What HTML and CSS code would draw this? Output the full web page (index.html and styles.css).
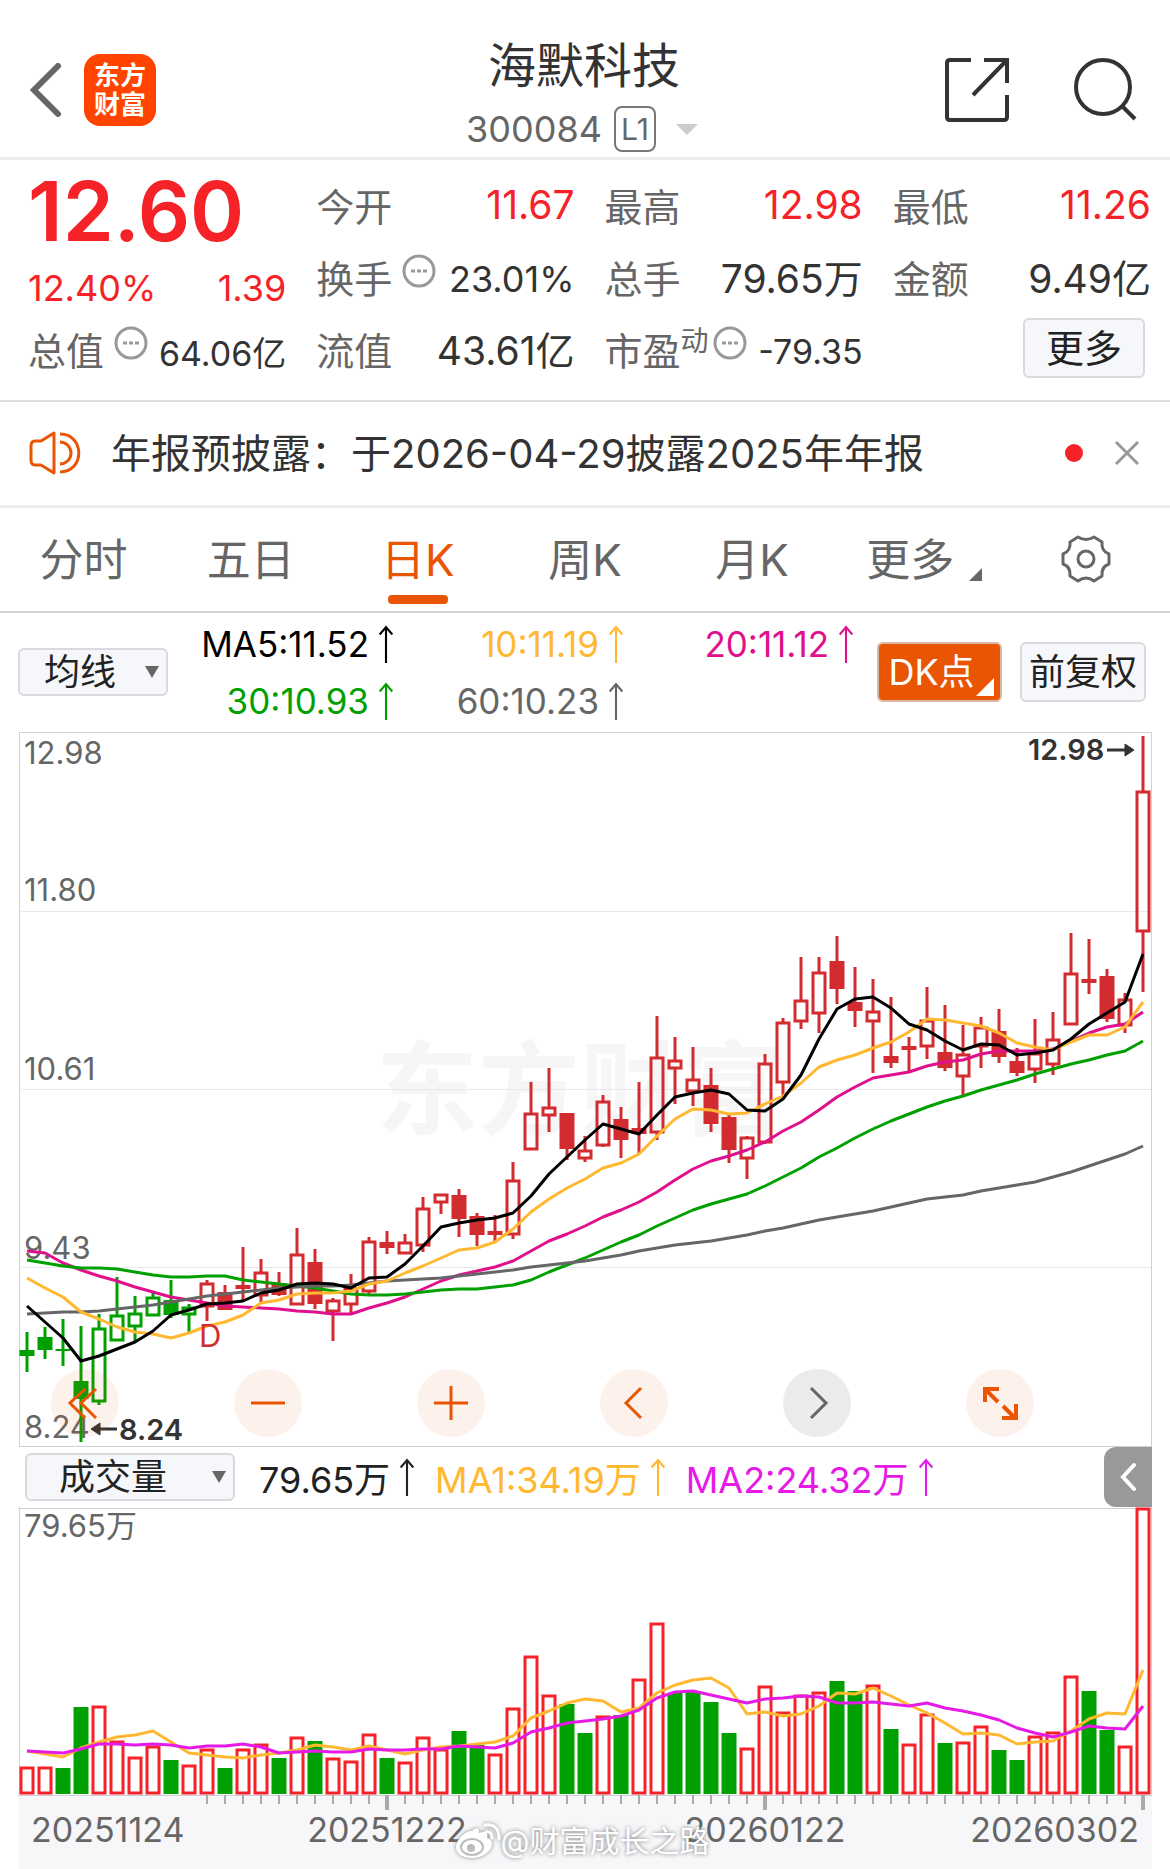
FILE: index.html
```html
<!DOCTYPE html>
<html lang="zh-CN">
<head>
    <meta charset="UTF-8">
    <meta name="viewport" content="width=device-width, initial-scale=1.0">
    <title>海默科技 300084</title>
    <link rel="stylesheet" href="styles.css">
</head>
<body>
    <header class="topbar">
        <div class="topbar-side">
            <button class="icon-btn" aria-label="返回">
                <svg width="32" height="54" viewBox="0 0 32 54"><path d="M28 3 4 27l24 24" fill="none" stroke="#666" stroke-width="6" stroke-linecap="round"/></svg>
            </button>
            <a class="logo" href="#">东方<br>财富</a>
        </div>
        <div class="stock">
            <h1>海默科技</h1>
            <div class="stock-code">
                <span>300084</span>
                <span class="level">L1</span>
                <span class="caret"></span>
            </div>
        </div>
        <div class="topbar-side right">
            <button class="icon-btn" aria-label="分享">
                <svg width="64" height="64" viewBox="0 0 64 64" fill="none" stroke="#333" stroke-width="4"><path d="M26 2H5Q2 2 2 5v54q0 3 3 3h54q3 0 3-3V37M39 2h23v23M61 3 28 37"/></svg>
            </button>
            <button class="icon-btn" aria-label="搜索">
                <svg width="64" height="64" viewBox="0 0 64 64" fill="none" stroke="#333" stroke-width="4"><circle cx="29" cy="29" r="27"/><path d="m48 48 13 13"/></svg>
            </button>
        </div>
    </header>

    <section class="quote">
        <div class="price">12.60</div>
        <div class="cell"><span class="label">今开</span><span class="value up">11.67</span></div>
        <div class="cell"><span class="label">最高</span><span class="value up">12.98</span></div>
        <div class="cell"><span class="label">最低</span><span class="value up">11.26</span></div>

        <div class="cell change up"><span>12.40%</span><span>1.39</span></div>
        <div class="cell">
            <span class="label">换手</span>
            <svg class="dots" viewBox="0 0 34 34"><circle cx="17" cy="17" r="15"/><path d="M9 17h4m2 0h4m2 0h4"/></svg>
            <span class="value small">23.01%</span>
        </div>
        <div class="cell"><span class="label">总手</span><span class="value">79.65万</span></div>
        <div class="cell"><span class="label">金额</span><span class="value">9.49亿</span></div>

        <div class="cell">
            <span class="label">总值</span>
            <svg class="dots" viewBox="0 0 34 34"><circle cx="17" cy="17" r="15"/><path d="M9 17h4m2 0h4m2 0h4"/></svg>
            <span class="value tiny">64.06亿</span>
        </div>
        <div class="cell"><span class="label">流值</span><span class="value">43.61亿</span></div>
        <div class="cell">
            <span class="label">市盈<sup>动</sup></span>
            <svg class="dots tight" viewBox="0 0 34 34"><circle cx="17" cy="17" r="15"/><path d="M9 17h4m2 0h4m2 0h4"/></svg>
            <span class="value tiny">-79.35</span>
        </div>
        <div class="cell more"><button class="btn">更多</button></div>
    </section>

    <section class="news">
        <svg width="52" height="44" viewBox="0 0 52 44" fill="none" stroke="#ea5504" stroke-width="3" stroke-linejoin="round"><path d="M25 2 12 10H6q-4 0-4 5v14q0 5 4 5h6l13 8zM31 11a11 11 0 0 1 0 22M31 3c25 0 25 38 0 38"/></svg>
        <a class="news-text" href="#">年报预披露：于2026-04-29披露2025年年报</a>
        <span class="red-dot"></span>
        <button class="icon-btn" aria-label="关闭">
            <svg width="26" height="26" viewBox="0 0 26 26"><path d="m2 2 22 22M24 2 2 24" stroke="#999" stroke-width="3"/></svg>
        </button>
    </section>

    <nav class="tabs">
        <button>分时</button>
        <button>五日</button>
        <button class="active">日K</button>
        <button>周K</button>
        <button>月K</button>
        <button class="has-corner">更多</button>
        <button aria-label="设置">
            <svg width="50" height="50" viewBox="0 0 50 50" fill="none" stroke="#666" stroke-width="3"><path d="M17 3Q25 8 33 3L41 8Q40 17 48 20V30Q40 33 41 42L33 47Q25 41 17 47L9 42Q10 33 2 30V20Q10 17 9 8Z" stroke-linejoin="round"/><circle cx="25" cy="25" r="8"/></svg>
        </button>
    </nav>

    <section class="indicators">
        <div class="select-wrap">
            <select aria-label="主图指标"><option>均线</option></select>
        </div>
        <div class="ma-list">
            <span class="ma5">MA5:11.52<svg class="arrow" viewBox="0 0 14 36"><path d="M7 36V2M1 9l6-7 6 7"/></svg></span>
            <span class="ma10">10:11.19<svg class="arrow" viewBox="0 0 14 36"><path d="M7 36V2M1 9l6-7 6 7"/></svg></span>
            <span class="ma20">20:11.12<svg class="arrow" viewBox="0 0 14 36"><path d="M7 36V2M1 9l6-7 6 7"/></svg></span>
            <span class="ma30">30:10.93<svg class="arrow" viewBox="0 0 14 36"><path d="M7 36V2M1 9l6-7 6 7"/></svg></span>
            <span class="ma60">60:10.23<svg class="arrow" viewBox="0 0 14 36"><path d="M7 36V2M1 9l6-7 6 7"/></svg></span>
        </div>
        <button class="btn dk">DK点</button>
        <button class="btn adjust">前复权</button>
    </section>

    <main class="charts">
        <div class="price-chart">
            <svg id="kline" viewBox="18 731 1134 716">
                <text class="watermark" x="376" y="1127">东方财富</text>
                <rect class="frame" x="19" y="732" width="1132" height="714"/>
                <path class="grid" d="M19 911.5h1132M19 1089.5h1132M19 1267.5h1132"/>
                <g class="axis-label">
                    <text x="24" y="764">12.98</text>
                    <text x="24" y="901">11.80</text>
                    <text x="24" y="1080">10.61</text>
                    <text x="24" y="1259">9.43</text>
                    <text x="24" y="1438">8.24</text>
                </g>
                <g id="candles"></g>
                <g id="maLines"></g>
                <text class="dividend" x="199" y="1347">D</text>
                <g class="extreme">
                    <text x="1028" y="760">12.98</text>
                    <path d="M1107 750h20"/><path class="head" d="m1125 744 9 6-9 6z"/>
                    <text x="119" y="1440">8.24</text>
                    <path d="M117 1429H97"/><path class="head" d="m100 1423-9 6 9 6z"/>
                </g>
            </svg>
            <div class="chart-tools">
                <button aria-label="最早"><svg viewBox="0 0 68 68"><path d="M34 20 19 34l15 15M45 20 30 34l15 15"/></svg></button>
                <button aria-label="缩小"><svg viewBox="0 0 68 68"><path d="M17 34h34"/></svg></button>
                <button aria-label="放大"><svg viewBox="0 0 68 68"><path d="M17 34h34M34 17v34"/></svg></button>
                <button aria-label="左移"><svg viewBox="0 0 68 68"><path d="M41 19 26 34l15 15"/></svg></button>
                <button class="disabled" aria-label="右移"><svg viewBox="0 0 68 68"><path d="m28 19 15 15-15 15"/></svg></button>
                <button aria-label="全屏"><svg viewBox="0 0 68 68"><path class="bold" d="M19 33V20h14M20 21l12 12M50 35v14H36M49 49 37 37"/></svg></button>
            </div>
        </div>

        <div class="volume-bar">
            <div class="select-wrap wide">
                <select aria-label="副图指标"><option>成交量</option></select>
            </div>
            <span class="vol">79.65万<svg class="arrow" viewBox="0 0 14 36"><path d="M7 36V2M1 9l6-7 6 7"/></svg></span>
            <span class="ma10">MA1:34.19万<svg class="arrow" viewBox="0 0 14 36"><path d="M7 36V2M1 9l6-7 6 7"/></svg></span>
            <span class="vma2">MA2:24.32万<svg class="arrow" viewBox="0 0 14 36"><path d="M7 36V2M1 9l6-7 6 7"/></svg></span>
            <button class="collapse" aria-label="展开">
                <svg width="16" height="30" viewBox="0 0 16 30"><path d="M14 3 3 15l11 12" fill="none" stroke="#fff" stroke-width="4" stroke-linecap="round"/></svg>
            </button>
        </div>

        <svg id="volume" viewBox="18 1507 1134 362">
            <rect x="18" y="1794" width="1134" height="75" fill="#f7f7fa"/>
            <path class="frame" d="M19 1794V1507M18 1508h1134M1151 1507v287M18 1795h1134"/>
            <text class="axis-label" x="24" y="1537">79.65万</text>
            <g id="volBars"></g>
            <g id="volLines"></g>
            <g id="ticks"></g>
            <g class="dates">
                <text x="31" y="1842">20251124</text>
                <text x="387" y="1842" text-anchor="middle">20251222</text>
                <text x="765" y="1842" text-anchor="middle">20260122</text>
                <text x="1139" y="1842" text-anchor="end">20260302</text>
            </g>
        </svg>

        <div class="credit">
            <svg width="46" height="38" viewBox="0 0 46 38">
                <path fill="#fff" d="M17 9c4-4 8-4 7 2 5-2 10-1 8 5 5 1 6 5 4 10-3 6-11 10-19 10C8 36 1 32 1 25 1 18 11 8 17 9z"/>
                <path fill="none" stroke="#fff" stroke-width="3" stroke-linecap="round" d="M31 10q6-1 6 6M30 3q14-2 14 14"/>
                <ellipse cx="17" cy="25" rx="11" ry="8" fill="none" stroke="#bbb" stroke-width="2"/>
                <circle cx="16" cy="26" r="4" fill="#bbb"/>
            </svg>
            <span>@财富成长之路</span>
        </div>
    </main>

    <script src="chart.js"></script>
</body>
</html>
```
FILE: styles.css
```css
* {
    box-sizing: border-box;
}

body {
    background-color: #fff;
    color: #333;
    font-family: Inter, "Noto Sans CJK SC", sans-serif;
    font-weight: 400;
    margin: 0;
}

button, select {
    font: inherit;
    color: inherit;
    border: none;
    background: none;
    padding: 0;
    margin: 0;
    cursor: pointer;
}

a {
    color: inherit;
    text-decoration: none;
}

svg {
    display: block;
}

.up {
    color: #f52228;
}

/* header */
.topbar {
    display: grid;
    grid-template-columns: 1fr auto 1fr;
    height: 160px;
    padding: 0 32px 0 30px;
    border-bottom: 3px solid #ededed;
}

.topbar-side {
    display: flex;
    align-items: center;
    gap: 22px;
    padding-top: 23px;
}

.topbar-side.right {
    justify-content: flex-end;
    gap: 65px;
}

.logo {
    display: flex;
    align-items: center;
    justify-content: center;
    width: 72px;
    height: 72px;
    border-radius: 16px;
    background-color: #ff4400;
    color: #fff;
    font-size: 26px;
    font-weight: 700;
    line-height: 29px;
}

.stock {
    display: flex;
    flex-direction: column;
    align-items: center;
    padding-top: 36px;
}

h1 {
    margin: 0;
    font-size: 48px;
    font-weight: 400;
    line-height: 60px;
}

.stock-code {
    display: flex;
    align-items: center;
    gap: 12px;
    margin-top: 10px;
    padding-right: 4px;
    color: #666;
    font-size: 36px;
    line-height: 46px;
}

.level {
    width: 42px;
    height: 46px;
    border: 2px solid #777;
    border-radius: 8px;
    font-size: 30px;
    line-height: 42px;
    text-align: center;
}

.caret {
    margin-left: 8px;
    border: 11px solid transparent;
    border-top-color: #ccc;
    border-bottom: none;
}

/* quote */
.quote {
    display: grid;
    grid-template-columns: repeat(4, 1fr);
    grid-auto-rows: 72px;
    column-gap: 30px;
    padding: 8px 19px 16px 28px;
    border-bottom: 2px solid #dcdce2;
}

.price {
    color: #f52228;
    font-size: 82px;
    font-weight: 600;
    line-height: 88px;
}

.cell {
    display: flex;
    align-items: center;
}

.change {
    justify-content: space-between;
    padding-top: 24px;
    font-size: 36px;
}

.label {
    color: #666;
    font-size: 38px;
    white-space: nowrap;
}

.label sup {
    font-size: 28px;
    line-height: 0;
}

.value {
    margin-left: auto;
    font-size: 39px;
    white-space: nowrap;
}

.small, .tiny {
    padding-top: 6px;
    font-size: 36px;
}

.tiny {
    font-size: 34px;
}

.dots {
    flex: none;
    width: 34px;
    height: 34px;
    margin: 0 0 10px 10px;
    fill: none;
    stroke: #999;
    stroke-width: 3;
}

.dots.tight {
    margin-left: 4px;
}

.btn {
    background-color: #f6f7fa;
    border: 2px solid #d9dae0;
    border-radius: 6px;
    color: #222;
}

.more {
    justify-content: flex-end;
    padding-right: 6px;
}

.more .btn {
    width: 122px;
    height: 60px;
    font-size: 38px;
    line-height: 50px;
}

/* news */
.news {
    display: flex;
    align-items: center;
    height: 106px;
    padding: 0 30px 2px 29px;
    border-bottom: 3px solid #ededed;
}

.news-text {
    flex: 1;
    margin-left: 30px;
    padding-bottom: 4px;
    font-size: 40px;
    white-space: nowrap;
}

.red-dot {
    width: 18px;
    height: 18px;
    margin-right: 31px;
    border-radius: 50%;
    background-color: #f52228;
}

/* tabs */
.tabs {
    display: grid;
    grid-template-columns: repeat(7, 1fr);
    height: 105px;
    border-bottom: 2px solid #d3d3da;
}

.tabs button {
    position: relative;
    display: flex;
    align-items: center;
    justify-content: center;
    padding-bottom: 6px;
    color: #666;
    font-size: 44px;
}

.tabs svg {
    margin-top: 4px;
}

.tabs .active {
    color: #ea5504;
}

.tabs .active::after {
    content: "";
    position: absolute;
    bottom: 7px;
    width: 60px;
    height: 9px;
    border-radius: 4px;
    background-color: #ea5504;
}

.tabs .has-corner {
    padding-right: 18px;
}

.has-corner::after {
    content: "";
    position: absolute;
    right: 21px;
    bottom: 30px;
    border-left: 13px solid transparent;
    border-bottom: 13px solid #666;
}

/* moving averages */
.indicators {
    display: flex;
    align-items: center;
    height: 118px;
    padding: 0 24px 0 18px;
}

.select-wrap {
    flex: none;
    position: relative;
    width: 150px;
    height: 48px;
}

.select-wrap.wide {
    width: 210px;
}

.select-wrap select {
    appearance: none;
    width: 100%;
    height: 100%;
    padding-left: 24px;
    background-color: #f6f7fa;
    border: 2px solid #d9dae0;
    border-radius: 6px;
    color: #222;
    font-size: 36px;
    line-height: 44px;
}

.select-wrap.wide select {
    padding-left: 32px;
}

.select-wrap::after {
    content: "";
    position: absolute;
    right: 9px;
    top: 18px;
    border: 7px solid transparent;
    border-top: 12px solid #666;
    border-bottom: none;
    pointer-events: none;
}

.ma-list {
    flex: 1;
    display: grid;
    grid-template-columns: 1fr 230px 230px;
    grid-auto-rows: 57px;
    padding-right: 23px;
    font-size: 35px;
}

.ma-list span {
    display: flex;
    align-items: center;
    justify-content: flex-end;
}

.arrow {
    flex: none;
    width: 16px;
    height: 38px;
    margin-left: 9px;
    fill: none;
    stroke: currentColor;
    stroke-width: 2;
}

.ma5 { color: #000; }
.ma10 { color: #ffb830; }
.ma20 { color: #e0108c; }
.ma30 { color: #00a000; }
.ma60 { color: #666; }
.vma2 { color: #e61ae6; }

.indicators .btn {
    flex: none;
    height: 60px;
    font-size: 36px;
    line-height: 50px;
    white-space: nowrap;
}

.indicators .dk {
    position: relative;
    width: 125px;
    padding-right: 16px;
    background-color: #ea5504;
    border-color: #d8b8a4;
    color: #fff;
}

.dk::after {
    content: "";
    position: absolute;
    right: 6px;
    bottom: 4px;
    border-left: 18px solid transparent;
    border-bottom: 18px solid #fff;
}

.indicators .adjust {
    width: 126px;
    margin-left: 18px;
}

/* charts */
.charts {
    position: relative;
    padding: 0 18px;
}

.price-chart {
    position: relative;
}

.charts > svg, .price-chart > svg {
    width: 100%;
    height: auto;
}

.frame {
    fill: none;
    stroke: #d0d0d8;
    stroke-width: 1;
    shape-rendering: crispEdges;
}

.grid {
    stroke: #e6e9ee;
}

.watermark {
    fill: #f6f6f6;
    font-size: 102px;
    font-weight: 700;
}

.axis-label {
    fill: #666;
    font-size: 31px;
}

.extreme {
    fill: #333;
    stroke: none;
    font-size: 29px;
    font-weight: 600;
}

.extreme path {
    stroke: #333;
    stroke-width: 3;
}

.extreme .head {
    stroke-width: 1;
}

.dividend {
    fill: #d22b30;
    font-size: 31px;
}

.dates {
    fill: #666;
    font-size: 34px;
}

.line {
    fill: none;
    stroke-width: 3;
    stroke-linejoin: round;
}

.chart-tools {
    position: absolute;
    left: 33px;
    right: 118px;
    bottom: 10px;
    display: flex;
    justify-content: space-between;
}

.chart-tools button {
    width: 68px;
    height: 68px;
    border-radius: 50%;
    background-color: rgba(234, 85, 4, 0.08);
}

.chart-tools path {
    fill: none;
    stroke: #ea5504;
    stroke-width: 3;
}

.chart-tools .bold {
    stroke-width: 4;
}

.chart-tools .disabled {
    background-color: #ebebeb;
}

.chart-tools .disabled path {
    stroke: #666;
}

.volume-bar {
    display: flex;
    align-items: center;
    height: 60px;
    padding-left: 7px;
    font-size: 36px;
}

.volume-bar span {
    display: flex;
    align-items: center;
    margin-left: 20px;
    white-space: nowrap;
}

.volume-bar .vol {
    margin-left: 24px;
    color: #222;
}

.collapse {
    display: flex;
    align-items: center;
    justify-content: center;
    width: 48px;
    height: 60px;
    margin-left: auto;
    border-radius: 12px 0 0 12px;
    background-color: #999;
}

.credit {
    position: absolute;
    left: 0;
    right: 0;
    bottom: 9px;
    display: flex;
    align-items: center;
    justify-content: center;
    padding-right: 6px;
    color: #fff;
    font-size: 30px;
    line-height: 38px;
    text-shadow: 0 0 4px #777;
}

.credit svg {
    filter: drop-shadow(0 0 2px #888);
}
```
FILE: chart.js
```js
const RED = '#d22b30';
const GREEN = '#00a000';
const STEP = 18;
const FIRST = 27;

// [high, body top, body bottom, low, colour + filled/hollow]
const candles = [
    [1332, 1350, 1356, 1372, 'gf'], [1327, 1337, 1350, 1359, 'gf'], [1319, 1349, 1351, 1366, 'gf'],
    [1326, 1381, 1399, 1442, 'gf'], [1314, 1328, 1402, 1405, 'gh'], [1277, 1315, 1341, 1341, 'gh'],
    [1296, 1313, 1327, 1343, 'gh'], [1292, 1297, 1316, 1316, 'gh'], [1280, 1300, 1315, 1318, 'gf'],
    [1304, 1307, 1315, 1332, 'gh'], [1280, 1283, 1307, 1321, 'rh'], [1285, 1292, 1310, 1310, 'rf'],
    [1247, 1285, 1289, 1301, 'rf'], [1259, 1272, 1296, 1303, 'rh'], [1272, 1283, 1295, 1296, 'rf'],
    [1228, 1254, 1305, 1305, 'rh'], [1249, 1262, 1304, 1309, 'rf'], [1298, 1300, 1312, 1341, 'rh'],
    [1274, 1288, 1305, 1313, 'rh'], [1237, 1241, 1292, 1294, 'rh'], [1231, 1242, 1248, 1254, 'rf'],
    [1234, 1242, 1254, 1254, 'rh'], [1197, 1208, 1246, 1252, 'rh'], [1194, 1194, 1203, 1214, 'rh'],
    [1189, 1195, 1219, 1237, 'rf'], [1213, 1216, 1235, 1246, 'rf'], [1215, 1231, 1235, 1243, 'rf'],
    [1162, 1180, 1235, 1239, 'rh'], [1082, 1113, 1150, 1150, 'rh'], [1068, 1107, 1116, 1132, 'rh'],
    [1113, 1113, 1149, 1160, 'rf'], [1136, 1150, 1159, 1162, 'rh'], [1095, 1101, 1146, 1147, 'rh'],
    [1107, 1119, 1140, 1158, 'rf'], [1082, 1128, 1134, 1153, 'rf'], [1016, 1057, 1133, 1140, 'rh'],
    [1037, 1060, 1069, 1104, 'rh'], [1047, 1079, 1092, 1106, 'rh'], [1068, 1085, 1124, 1132, 'rf'],
    [1115, 1117, 1150, 1163, 'rf'], [1136, 1137, 1159, 1179, 'rh'], [1054, 1063, 1143, 1144, 'rh'],
    [1018, 1022, 1083, 1095, 'rh'], [957, 1000, 1022, 1029, 'rh'], [957, 972, 1014, 1033, 'rh'],
    [936, 961, 989, 1004, 'rf'], [967, 1002, 1011, 1027, 'rf'], [979, 1011, 1022, 1073, 'rh'],
    [997, 1056, 1063, 1068, 'rf'], [1037, 1046, 1050, 1073, 'rf'], [987, 1020, 1047, 1059, 'rh'],
    [1005, 1052, 1068, 1071, 'rf'], [1025, 1054, 1077, 1095, 'rh'], [1017, 1027, 1047, 1068, 'rh'],
    [1009, 1031, 1057, 1063, 'rf'], [1048, 1061, 1073, 1076, 'rf'], [1019, 1053, 1070, 1083, 'rh'],
    [1012, 1039, 1065, 1075, 'rh'], [933, 973, 1025, 1025, 'rh'], [939, 979, 983, 994, 'rf'],
    [969, 976, 1019, 1022, 'rf'], [993, 999, 1026, 1033, 'rh'], [736, 791, 932, 992, 'rh']
];

const ma = {
    '#e0108c': [1251, 1253, 1263, 1270, 1276, 1281, 1287, 1292, 1297, 1300, 1303, 1306, 1307, 1308, 1309, 1311, 1312, 1314, 1314, 1308, 1303, 1297, 1289, 1281, 1275, 1271, 1267, 1261, 1251, 1241, 1234, 1226, 1217, 1210, 1202, 1192, 1180, 1169, 1161, 1156, 1150, 1142, 1131, 1122, 1110, 1097, 1087, 1078, 1075, 1072, 1066, 1062, 1060, 1054, 1051, 1051, 1051, 1049, 1041, 1033, 1027, 1024, 1012],
    '#00a000': [1260, 1263, 1266, 1268, 1268, 1269, 1272, 1275, 1277, 1277, 1276, 1276, 1280, 1282, 1284, 1286, 1288, 1291, 1294, 1295, 1295, 1294, 1292, 1290, 1289, 1289, 1287, 1285, 1280, 1272, 1265, 1258, 1250, 1242, 1235, 1226, 1218, 1210, 1204, 1199, 1194, 1186, 1177, 1168, 1157, 1148, 1138, 1129, 1121, 1114, 1107, 1101, 1096, 1090, 1085, 1080, 1074, 1069, 1064, 1060, 1055, 1051, 1041],
    '#666': [1314, 1313, 1312, 1312, 1311, 1309, 1307, 1305, 1302, 1299, 1296, 1294, 1292, 1290, 1288, 1287, 1286, 1286, 1285, 1283, 1281, 1280, 1279, 1278, 1276, 1274, 1272, 1270, 1267, 1265, 1263, 1261, 1258, 1255, 1251, 1248, 1245, 1243, 1241, 1238, 1235, 1231, 1228, 1224, 1220, 1217, 1214, 1211, 1207, 1203, 1199, 1197, 1195, 1191, 1188, 1185, 1182, 1177, 1172, 1166, 1160, 1154, 1146],
    '#ffb830': [1278, 1288, 1297, 1312, 1319, 1327, 1332, 1334, 1338, 1333, 1326, 1322, 1315, 1303, 1300, 1294, 1293, 1293, 1291, 1284, 1281, 1273, 1266, 1258, 1250, 1248, 1242, 1229, 1212, 1199, 1188, 1179, 1168, 1163, 1154, 1136, 1119, 1109, 1110, 1114, 1113, 1104, 1096, 1083, 1067, 1060, 1055, 1048, 1042, 1032, 1019, 1020, 1023, 1026, 1033, 1043, 1047, 1050, 1042, 1035, 1035, 1027, 1002],
    '#000': [1306, 1322, 1338, 1361, 1356, 1349, 1342, 1331, 1315, 1310, 1304, 1303, 1301, 1293, 1290, 1284, 1283, 1284, 1288, 1278, 1277, 1264, 1246, 1227, 1223, 1220, 1218, 1213, 1196, 1174, 1157, 1140, 1124, 1129, 1134, 1115, 1097, 1093, 1090, 1094, 1110, 1111, 1099, 1075, 1039, 1009, 999, 997, 1008, 1024, 1030, 1041, 1050, 1044, 1045, 1055, 1053, 1050, 1039, 1024, 1013, 1002, 954]
};

const volTops = [1767, 1767, 1768, 1707, 1706, 1741, 1757, 1746, 1760, 1765, 1749, 1768, 1749, 1744, 1758, 1737, 1741, 1758, 1761, 1734, 1758, 1762, 1737, 1749, 1731, 1745, 1754, 1708, 1656, 1695, 1704, 1733, 1716, 1715, 1679, 1623, 1693, 1692, 1702, 1733, 1748, 1686, 1712, 1695, 1692, 1681, 1691, 1685, 1729, 1744, 1714, 1743, 1742, 1726, 1750, 1760, 1736, 1732, 1676, 1691, 1730, 1746, 1508];
const volDown = [2, 3, 8, 11, 14, 16, 20, 24, 25, 30, 31, 33, 36, 37, 38, 39, 45, 46, 48, 51, 54, 55, 59, 60];

const volMa = {
    '#ffb830': [1751, 1754, 1757, 1748, 1742, 1737, 1735, 1731, 1742, 1753, 1755, 1757, 1758, 1755, 1753, 1750, 1745, 1747, 1750, 1746, 1750, 1754, 1750, 1747, 1746, 1744, 1742, 1736, 1718, 1711, 1703, 1699, 1701, 1712, 1708, 1693, 1685, 1680, 1678, 1688, 1714, 1712, 1716, 1714, 1706, 1693, 1694, 1688, 1696, 1705, 1713, 1723, 1734, 1733, 1735, 1744, 1742, 1741, 1731, 1719, 1713, 1714, 1670],
    '#e61ae6': [1751, 1752, 1753, 1749, 1744, 1744, 1745, 1744, 1745, 1748, 1746, 1746, 1744, 1747, 1753, 1752, 1751, 1752, 1752, 1749, 1750, 1750, 1749, 1749, 1746, 1747, 1748, 1743, 1732, 1728, 1723, 1721, 1719, 1716, 1710, 1698, 1692, 1691, 1695, 1699, 1703, 1699, 1698, 1696, 1697, 1703, 1703, 1702, 1704, 1706, 1703, 1708, 1711, 1715, 1720, 1728, 1733, 1737, 1732, 1726, 1728, 1729, 1706]
};

function drawCandles() {
    let html = '';
    candles.forEach(([high, top, bottom, low, type], i) => {
        const x = FIRST + i * STEP;
        const color = type[0] === 'g' ? GREEN : RED;
        if (type[1] === 'f') {
            html += `<path d="M${x} ${high}V${low}" stroke="${color}" stroke-width="3"/>`;
            html += `<rect x="${x - 7.5}" y="${top}" width="15" height="${bottom - top}" fill="${color}"/>`;
        } else {
            html += `<path d="M${x} ${high}V${top}M${x} ${bottom}V${low}" stroke="${color}" stroke-width="3"/>`;
            html += `<rect x="${x - 6}" y="${top + 1}" width="12" height="${bottom - top - 2}" fill="none" stroke="${color}" stroke-width="3"/>`;
        }
    });
    document.getElementById('candles').innerHTML = html;
}

function drawLines(id, series) {
    let html = '';
    for (const color in series) {
        const points = series[color].map((y, i) => `${FIRST + i * STEP},${y}`).join(' ');
        html += `<polyline class="line" stroke="${color}" points="${points}"/>`;
    }
    document.getElementById(id).innerHTML = html;
}

function drawVolume() {
    let html = '';
    volTops.forEach((y, i) => {
        const x = FIRST + i * STEP;
        if (volDown.includes(i)) {
            html += `<rect x="${x - 7.5}" y="${y}" width="15" height="${1794 - y}" fill="${GREEN}"/>`;
        } else {
            html += `<rect x="${x - 6}" y="${y + 1}" width="12" height="${1792 - y}" fill="none" stroke="#f52228" stroke-width="3"/>`;
        }
    });
    document.getElementById('volBars').innerHTML = html;
}

function drawTicks() {
    let html = '';
    for (let i = 10; i < volTops.length; i++) {
        const major = (i + 1) % 21 === 0;
        html += `<path d="M${FIRST + i * STEP} 1795v${major ? 15 : 9}" stroke="#aaa" stroke-width="${major ? 4 : 2}"/>`;
    }
    document.getElementById('ticks').innerHTML = html;
}

drawCandles();
drawLines('maLines', ma);
drawVolume();
drawLines('volLines', volMa);
drawTicks();
```
